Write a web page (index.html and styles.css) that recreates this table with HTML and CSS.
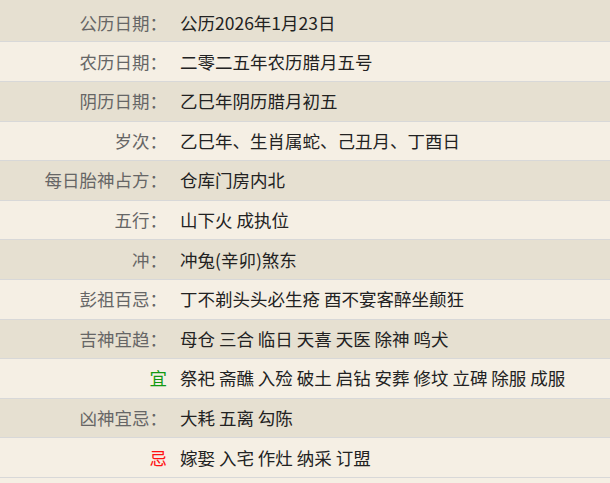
FILE: index.html
```html
<!DOCTYPE html>
<html lang="zh-CN">
<head>
<meta charset="utf-8">
<title>黄历</title>
<link rel="stylesheet" href="styles.css">
</head>
<body>
<div class="almanac">
  <div class="row odd first"><div class="label">公历日期：</div><div class="value">公历2026年1月23日</div></div>
  <div class="row even"><div class="label">农历日期：</div><div class="value">二零二五年农历腊月五号</div></div>
  <div class="row odd"><div class="label">阴历日期：</div><div class="value">乙巳年阴历腊月初五</div></div>
  <div class="row even"><div class="label">岁次：</div><div class="value">乙巳年、生肖属蛇、己丑月、丁酉日</div></div>
  <div class="row odd"><div class="label">每日胎神占方：</div><div class="value">仓库门房内北</div></div>
  <div class="row even"><div class="label">五行：</div><div class="value">山下火 成执位</div></div>
  <div class="row odd"><div class="label">冲：</div><div class="value">冲兔(辛卯)煞东</div></div>
  <div class="row even"><div class="label">彭祖百忌：</div><div class="value">丁不剃头头必生疮 酉不宴客醉坐颠狂</div></div>
  <div class="row odd"><div class="label">吉神宜趋：</div><div class="value">母仓 三合 临日 天喜 天医 除神 鸣犬</div></div>
  <div class="row even"><div class="label"><span class="yi">宜</span></div><div class="value">祭祀 斋醮 入殓 破土 启钻 安葬 修坟 立碑 除服 成服</div></div>
  <div class="row odd"><div class="label">凶神宜忌：</div><div class="value">大耗 五离 勾陈</div></div>
  <div class="row even"><div class="label"><span class="ji">忌</span></div><div class="value">嫁娶 入宅 作灶 纳采 订盟</div></div>
</div>
</body>
</html>
```
FILE: styles.css
```css
html, body {
  margin: 0;
  padding: 0;
  background: #f5efe4;
}
body {
  font-family: "Noto Sans CJK SC", "Noto Sans", sans-serif;
  font-size: 17.5px;
  color: #222;
}
.almanac {
  width: 610px;
  display: flex;
  flex-direction: column;
}
.row {
  display: flex;
  align-items: center;
  height: 38.6px;
  border-bottom: 1px solid #d8d8d8;
  line-height: 24px;
}
.row.first {
  height: 41.4px;
  align-items: flex-end;
}
.row.first .label,
.row.first .value {
  padding-bottom: 6px;
}
.odd { background: #e6e0d1; }
.even { background: #f5efe4; }
.label {
  width: 167px;
  flex: none;
  text-align: right;
  color: #666;
}
.value {
  padding-left: 13px;
  color: #222;
}
.yi { color: #119911; }
.ji { color: #ff1111; }
```
